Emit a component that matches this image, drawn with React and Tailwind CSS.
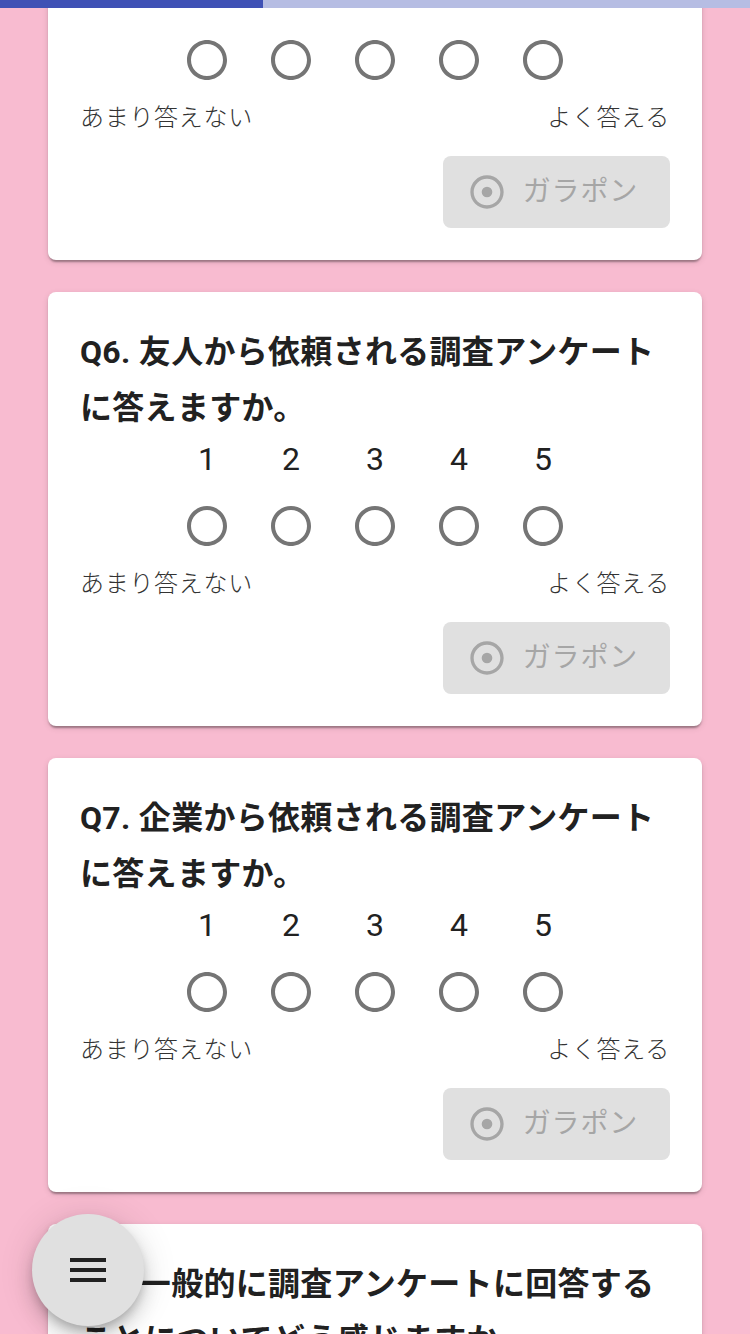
import React from 'react';

const QUESTIONS = [
  { id: 5, title: 'Q5. 家族から依頼される調査アンケートに答えますか。' },
  { id: 6, title: 'Q6. 友人から依頼される調査アンケートに答えますか。' },
  { id: 7, title: 'Q7. 企業から依頼される調査アンケートに答えますか。' },
  { id: 8, title: 'Q8. 一般的に調査アンケートに回答することについてどう感じますか。' },
];

const font = { fontFamily: 'Roboto, "Noto Sans CJK JP", sans-serif' };

function RadioOff() {
  return (
    <svg viewBox="0 0 24 24" className="w-[48px] h-[48px]" fill="#757575">
      <path d="M12 2C6.48 2 2 6.48 2 12s4.48 10 10 10 10-4.48 10-10S17.52 2 12 2zm0 18c-4.42 0-8-3.58-8-8s3.58-8 8-8 8 3.58 8 8-3.58 8-8 8z" />
    </svg>
  );
}

function RadioOn() {
  return (
    <svg viewBox="0 0 24 24" className="w-[40px] h-[40px]" fill="#a6a6a6">
      <path d="M12 2C6.48 2 2 6.48 2 12s4.48 10 10 10 10-4.48 10-10S17.52 2 12 2zm0 18c-4.42 0-8-3.58-8-8s3.58-8 8-8 8 3.58 8 8-3.58 8-8 8z" />
      <circle cx="12" cy="12" r="3.2" />
    </svg>
  );
}

function QuestionCard({ title }) {
  return (
    <div className="bg-white rounded-[8px] px-[32px] pt-[32px] pb-[32px] shadow-[0_4px_2px_-2px_rgba(0,0,0,0.2),0_2px_2px_0_rgba(0,0,0,0.14),0_2px_6px_0_rgba(0,0,0,0.12)]">
      <h2 className="text-[32px] leading-[56px] font-bold tracking-[0.3px] text-[#212121]" style={font}>{title}</h2>

      <div className="flex justify-center">
        {[1, 2, 3, 4, 5].map((n) => (
          <div key={n} className="flex flex-col items-center w-[84px]">
            <span className="text-[32px] leading-[46px] text-[#212121]" style={font}>{n}</span>
            <div className="w-[84px] h-[84px] mt-[2px] flex items-center justify-center">
              <RadioOff />
            </div>
          </div>
        ))}
      </div>

      <div className="flex justify-between text-[24px] leading-[32px] font-light tracking-[0.7px] text-[#333333]" style={font}>
        <span>あまり答えない</span>
        <span>よく答える</span>
      </div>

      <div className="flex justify-end mt-[22px]">
        <button
          disabled
          className="h-[72px] bg-[#e0e0e0] rounded-[8px] pl-[24px] pr-[32px] flex items-center gap-[16px] text-[28px] tracking-[0.8px] text-[#a6a6a6]"
          style={font}
        >
          <RadioOn />
          ガラポン
        </button>
      </div>
    </div>
  );
}

export default function App() {
  return (
    <div className="relative w-[750px] h-[1334px] overflow-hidden bg-[#f8bbd0]">
      <div className="flex flex-col gap-[32px] px-[48px] mt-[-174px]">
        {QUESTIONS.map((q) => (
          <QuestionCard key={q.id} title={q.title} />
        ))}
      </div>

      {/* progress */}
      <div className="absolute top-0 left-0 w-full h-[8px] bg-[#b6bde3]">
        <div className="h-full w-[263px] bg-[#3f51b5]" />
      </div>

      {/* menu fab */}
      <button className="absolute left-[32px] bottom-[8px] w-[112px] h-[112px] rounded-full bg-[#e0e0e0] flex items-center justify-center shadow-[0_6px_10px_-2px_rgba(0,0,0,0.2),0_12px_20px_0_rgba(0,0,0,0.14),0_2px_36px_0_rgba(0,0,0,0.12)]">
        <svg viewBox="0 0 24 24" className="w-[48px] h-[48px]" fill="#212121">
          <path d="M3 18h18v-2H3v2zm0-5h18v-2H3v2zm0-7v2h18V6H3z" />
        </svg>
      </button>
    </div>
  );
}
